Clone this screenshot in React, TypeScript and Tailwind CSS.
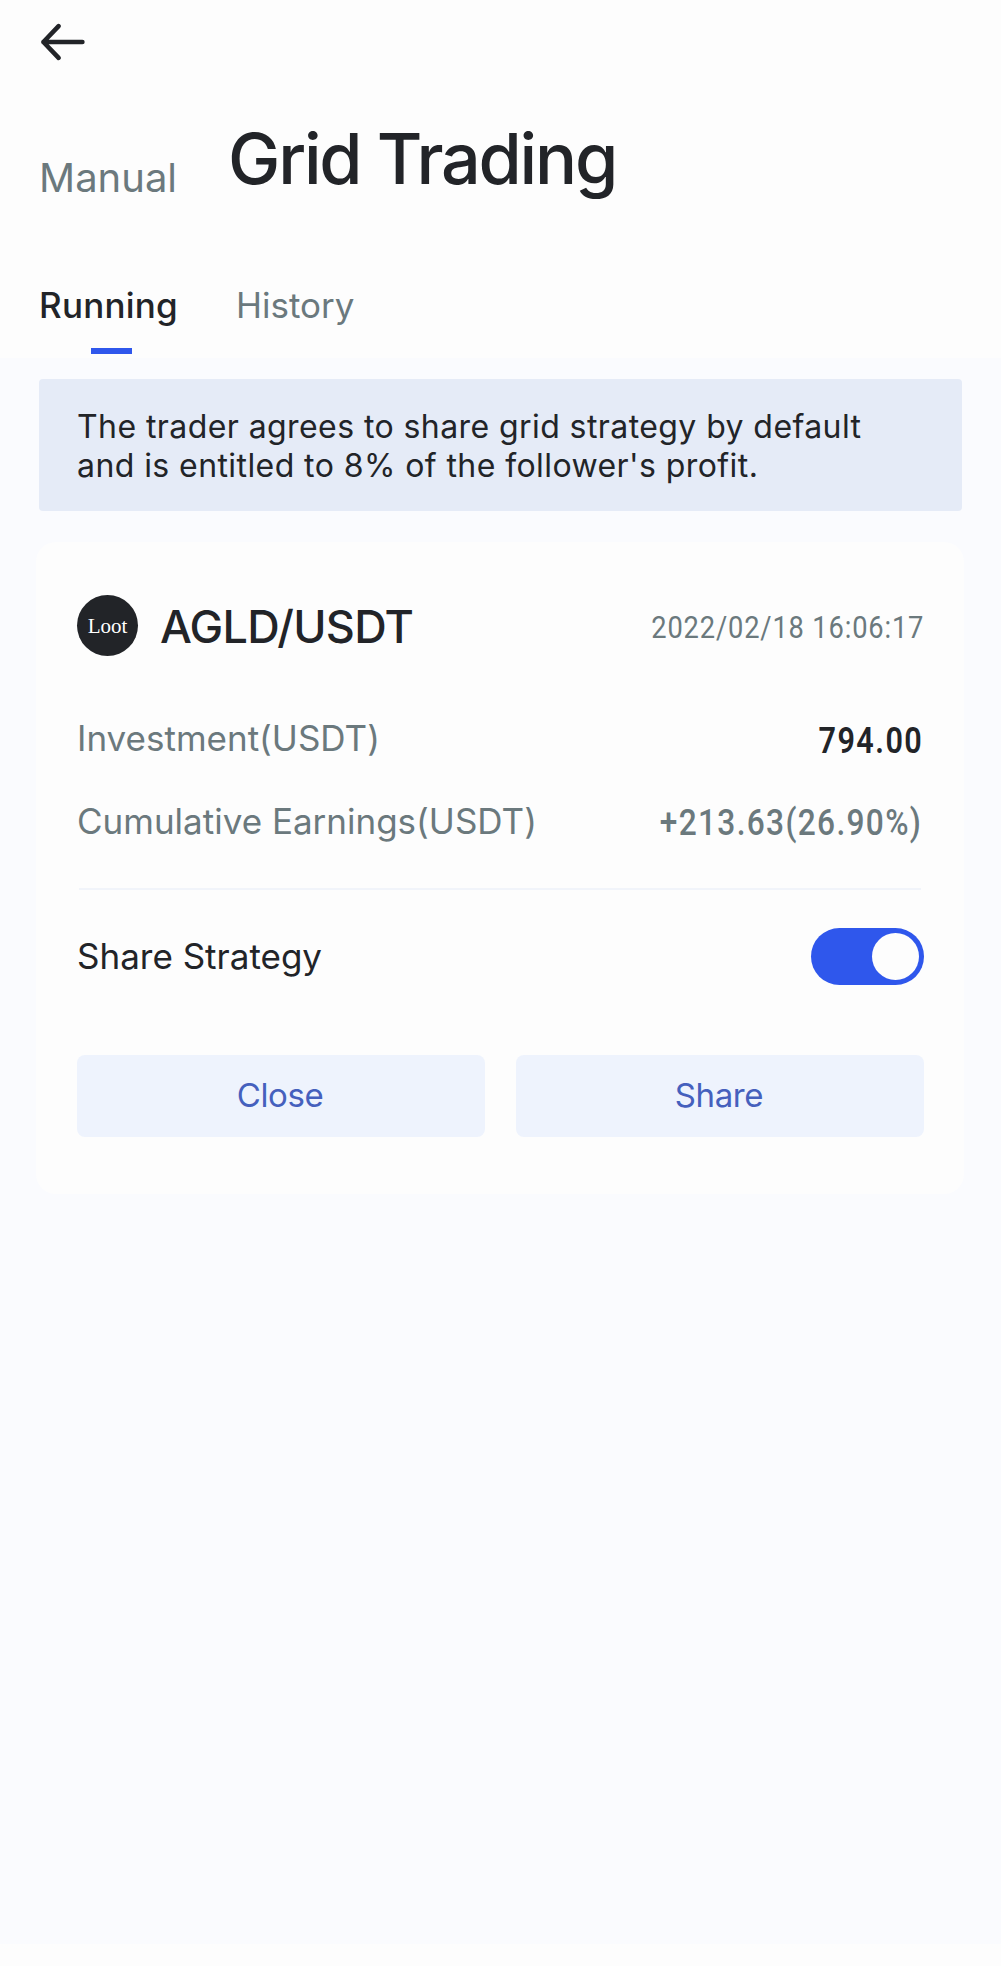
import type { ReactNode } from "react";

function BackArrow() {
  return (
    <svg
      className="block h-[40px] w-[48px]"
      viewBox="0 0 48 40"
      fill="none"
      stroke="currentColor"
      strokeWidth="4.6"
      strokeLinecap="round"
      strokeLinejoin="round"
    >
      <path d="M4.4 20H43.4M19.6 4.2 4.4 20 19.6 35.8" />
    </svg>
  );
}

function Row({ label, children }: { label: string; children: ReactNode }) {
  return (
    <div className="flex h-[42px] justify-between leading-[42px] text-[#6b797d]">
      <span className="text-[35px]">{label}</span>
      {children}
    </div>
  );
}

function ActionButton({ children }: { children: ReactNode }) {
  return (
    <button className="flex h-[82px] flex-1 justify-center rounded-lg bg-[#eef3fd] pr-0.5 text-[33px] leading-[80px] tracking-[-0.4px] text-[#4560bd]">
      {children}
    </button>
  );
}

export default function App() {
  return (
    <div className="flex h-[1966px] w-[1001px] flex-col bg-[#fdfdfd] font-['Inter',sans-serif] text-[#222428]">
      <header className="flex h-[358px] shrink-0 flex-col">
        <button className="mt-[22px] ml-[39px] w-fit" aria-label="Back">
          <BackArrow />
        </button>
        <div className="mt-[54px] flex items-start whitespace-nowrap">
          <span className="mt-[38px] ml-[39px] w-[189px] text-[40px] leading-[48px] text-[#6b797d]">Manual</span>
          <h1 className="mt-px text-[70px] font-medium leading-[84px] tracking-[-2.2px]">Grid Trading</h1>
        </div>
        <nav className="mt-[82px] flex text-[35px] leading-[42px]">
          <div className="ml-[39px] w-[197px]">
            <div className="font-medium tracking-[0.2px]">Running</div>
            <div className="mt-[22px] ml-[52px] h-[6px] w-[41px] bg-[#2f57ec]" />
          </div>
          <div className="text-[#6b797d]">History</div>
        </nav>
      </header>

      <main className="h-[1586px] shrink-0 bg-[#fafbfe] pt-[21px]">
        <p className="mr-[39px] ml-[39px] h-[132px] rounded-[4px] bg-[#e5ebf7] pt-[28px] pl-[38px] text-[32px] leading-[39px] tracking-[0.42px]">
          The trader agrees to share grid strategy by default
          <br />
          and is entitled to 8% of the follower's profit.
        </p>

        <section className="mt-[31px] mr-[37px] ml-[36px] flex h-[652px] flex-col rounded-[20px] bg-[#fdfdfd] pt-[53px] pr-[40px] pl-[41px]">
          <div className="flex h-[61px] items-center">
            <div className="flex size-[61px] items-center justify-center rounded-full bg-[#222428] pt-0.5 font-['Liberation_Serif',serif] text-[21px] leading-none text-white">
              Loot
            </div>
            <h2 className="mt-0.5 ml-[22px] text-[45px] font-medium leading-[61px] tracking-[-0.7px]">AGLD/USDT</h2>
            <time className="mt-1.5 ml-auto origin-right scale-x-[0.88] font-['Roboto',sans-serif] text-[31px] tracking-[0.95px] text-[#6b797d]">
              2022/02/18 16:06:17
            </time>
          </div>

          <div className="mt-[61px] flex flex-col gap-[41px]">
            <Row label="Investment(USDT)">
              <span className="mt-[3px] mr-px origin-right scale-x-[0.85] font-['Roboto',sans-serif] text-[36px] font-semibold tracking-[1.7px] text-[#222428]">
                794.00
              </span>
            </Row>
            <Row label="Cumulative Earnings(USDT)">
              <span className="mt-[2px] mr-[2px] origin-right scale-x-[0.88] font-['Roboto',sans-serif] text-[36px] font-medium tracking-[1.5px]">
                +213.63(26.90%)
              </span>
            </Row>
          </div>

          <div className="mt-[46px] mr-[3px] ml-[2px] h-[2px] bg-[#f1f4fa]" />

          <div className="mt-[38px] flex h-[57px] justify-between">
            <span className="text-[35px] leading-[57px]">Share Strategy</span>
            <button
              role="switch"
              aria-checked="true"
              aria-label="Share Strategy"
              className="flex h-[57px] w-[113px] items-center justify-end rounded-full bg-[#2f57ec] pr-[5px]"
            >
              <span className="size-[47px] rounded-full bg-[#fdfdfd]" />
            </button>
          </div>

          <div className="mt-[70px] flex gap-[31px]">
            <ActionButton>Close</ActionButton>
            <ActionButton>Share</ActionButton>
          </div>
        </section>
      </main>
    </div>
  );
}
